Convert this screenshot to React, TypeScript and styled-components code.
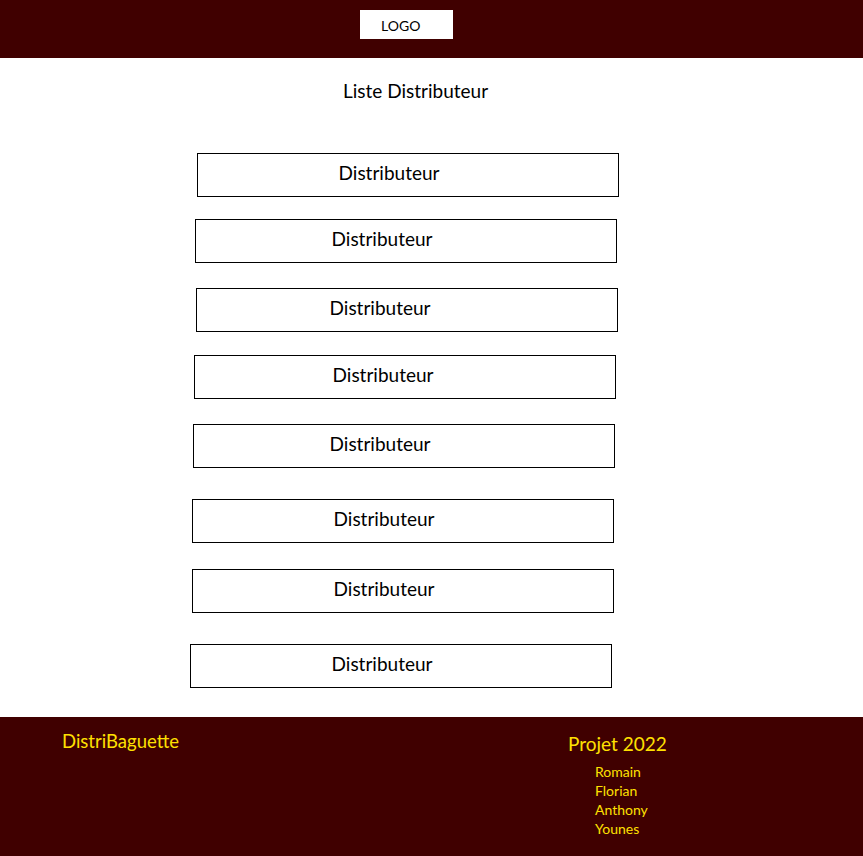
import styled, { createGlobalStyle } from "styled-components";

const GlobalStyle = createGlobalStyle`
  html, body {
    margin: 0;
    padding: 0;
    background: #ffffff;
  }
  body {
    font-family: Lato, "Open Sans", sans-serif;
    color: #000000;
  }
`;

const Page = styled.div`
  width: 863px;
  min-height: 856px;
  display: flex;
  flex-direction: column;
`;

const Header = styled.header`
  height: 58px;
  background: #400000;
  display: flex;
  align-items: flex-start;
  padding-left: 360px;
  box-sizing: border-box;
`;

const Logo = styled.div`
  margin-top: 10px;
  width: 93px;
  height: 29px;
  background: #ffffff;
  display: flex;
  align-items: center;
  padding-left: 21px;
  padding-top: 2px;
  box-sizing: border-box;
  font-size: 14px;
  color: #000000;
`;

const Main = styled.main`
  flex: 1;
  display: flex;
  flex-direction: column;
  padding-bottom: 29px;
`;

const Title = styled.h1`
  margin: 20px 0 0;
  padding-left: 343px;
  font-size: 19px;
  font-weight: 400;
  line-height: 26px;
`;

const List = styled.ul`
  list-style: none;
  margin: 0;
  padding: 0;
  padding-top: 49px;
  display: flex;
  flex-direction: column;
`;

const Item = styled.li<{ $left: number; $top: number; $shift: number }>`
  margin-top: ${(p) => p.$top}px;
  margin-left: ${(p) => p.$left}px;
  width: 422px;
  height: 44px;
  box-sizing: border-box;
  border: 1px solid #000000;
  display: flex;
  align-items: center;
  justify-content: center;
  padding-right: ${(p) => p.$shift}px;
  padding-bottom: 5px;
  font-size: 19px;
`;

const Footer = styled.footer`
  height: 139px;
  background: #400000;
  color: #ffe000;
  display: flex;
  box-sizing: border-box;
  padding-top: 12px;
`;

const Brand = styled.div`
  margin-left: 62px;
  width: 506px;
  font-size: 18.5px;
  line-height: 24px;
`;

const Project = styled.div`
  display: flex;
  flex-direction: column;
`;

const ProjectTitle = styled.div`
  font-size: 19px;
  line-height: 26px;
  margin-top: 2px;
`;

const Names = styled.ul`
  list-style: none;
  margin: 5px 0 0 27px;
  padding: 0;
  font-size: 14px;
  line-height: 19px;
`;

// top gap, left edge and text shift taken per row from the mockup
const rows = [
  { left: 197, top: 0, shift: 38 },
  { left: 195, top: 22, shift: 48 },
  { left: 196, top: 25, shift: 54 },
  { left: 194, top: 23, shift: 44 },
  { left: 193, top: 25, shift: 48 },
  { left: 192, top: 31, shift: 38 },
  { left: 192, top: 26, shift: 38 },
  { left: 190, top: 31, shift: 38 },
];

const members = ["Romain", "Florian", "Anthony", "Younes"];

export default function App() {
  return (
    <>
      <GlobalStyle />
      <Page>
        <Header>
          <Logo>LOGO</Logo>
        </Header>

        <Main>
          <Title>Liste Distributeur</Title>
          <List>
            {rows.map((row, idx) => (
              <Item key={idx} $left={row.left} $top={row.top} $shift={row.shift}>
                Distributeur
              </Item>
            ))}
          </List>
        </Main>

        <Footer>
          <Brand>DistriBaguette</Brand>
          <Project>
            <ProjectTitle>Projet 2022</ProjectTitle>
            <Names>
              {members.map((name) => (
                <li key={name}>{name}</li>
              ))}
            </Names>
          </Project>
        </Footer>
      </Page>
    </>
  );
}
